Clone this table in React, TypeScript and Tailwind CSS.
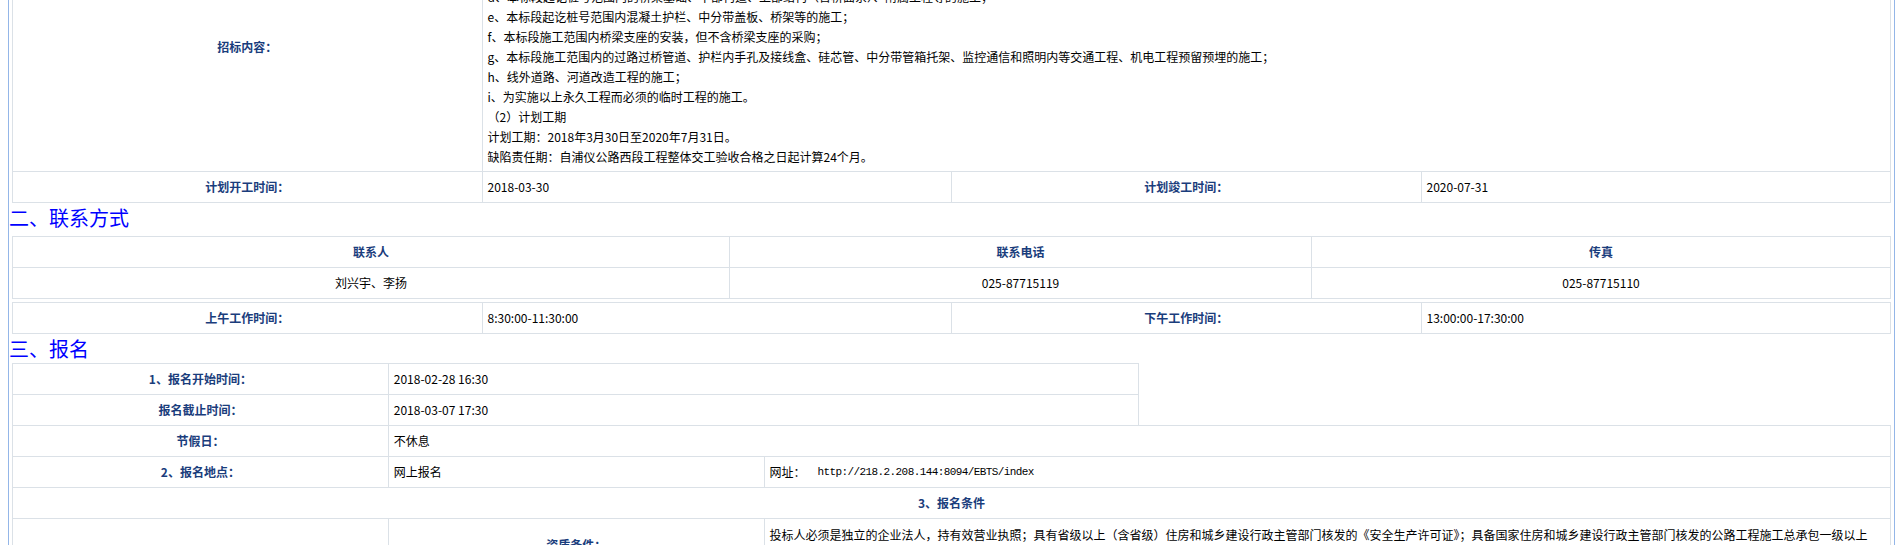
import React from "react";

const cell = "border-l border-t border-[#dbe1e7]";
const lab = "font-bold text-[#1a3d7c]";

const content = [
  "（1）招标范围：a、本标段起讫桩号范围内的路基、路面、涵洞通道工程的施工；",
  "b、本标段起讫桩号范围内的排水、防护工程及绿化工程的施工；",
  "c、本标段起讫桩号范围内的交通安全设施工程的施工；",
  "d、本标段起讫桩号范围内的桥梁基础、下部构造、上部结构（含桥面系）、附属工程等的施工；",
  "e、本标段起讫桩号范围内混凝土护栏、中分带盖板、桥架等的施工；",
  "f、本标段施工范围内桥梁支座的安装，但不含桥梁支座的采购；",
  "g、本标段施工范围内的过路过桥管道、护栏内手孔及接线盒、硅芯管、中分带管箱托架、监控通信和照明内等交通工程、机电工程预留预埋的施工；",
  "h、线外道路、河道改造工程的施工；",
  "i、为实施以上永久工程而必须的临时工程的施工。",
  "（2）计划工期",
  "计划工期：2018年3月30日至2020年7月31日。",
  "缺陷责任期：自浦仪公路西段工程整体交工验收合格之日起计算24个月。",
];

export default function App() {
  return (
    <div className="h-[545px] overflow-hidden bg-white text-[12px] text-black font-['Noto_Sans_CJK_SC',sans-serif]">
      <div className="mx-[8px] h-full flex flex-col border-x border-[#94b6e8]">
        <div className="px-[3px] -mt-[78px]">
          {/* Table 1 */}
          <div className="grid grid-cols-4 border-r border-b border-[#dbe1e7]">
            <div className={`${cell} ${lab} flex items-center justify-center`}>招标内容：</div>
            <div className={`${cell} col-span-3 py-[4px] px-[5px] leading-[20px]`}>
              {content.map((l, i) => (
                <div key={i} className="whitespace-nowrap">{l}</div>
              ))}
            </div>
            <div className={`${cell} ${lab} h-[31px] flex items-center justify-center`}>计划开工时间：</div>
            <div className={`${cell} h-[31px] flex items-center px-[5px]`}>2018-03-30</div>
            <div className={`${cell} ${lab} h-[31px] flex items-center justify-center`}>计划竣工时间：</div>
            <div className={`${cell} h-[31px] flex items-center px-[5px]`}>2020-07-31</div>
          </div>

          <div className="-mx-[3px] h-[33px] leading-[30px] text-[20px] text-[#0000ff]">二、联系方式</div>

          {/* Contact table */}
          <div className="grid grid-cols-[717px_582px_1fr] border-r border-b border-[#dbe1e7]">
            <div className={`${cell} ${lab} h-[31px] flex items-center justify-center`}>联系人</div>
            <div className={`${cell} ${lab} h-[31px] flex items-center justify-center`}>联系电话</div>
            <div className={`${cell} ${lab} h-[31px] flex items-center justify-center`}>传真</div>
            <div className={`${cell} h-[31px] flex items-center justify-center`}>刘兴宇、李扬</div>
            <div className={`${cell} h-[31px] flex items-center justify-center`}>025-87715119</div>
            <div className={`${cell} h-[31px] flex items-center justify-center`}>025-87715110</div>
          </div>

          <div className="mt-[3px] grid grid-cols-4 border-r border-b border-[#dbe1e7]">
            <div className={`${cell} ${lab} h-[31px] flex items-center justify-center`}>上午工作时间：</div>
            <div className={`${cell} h-[31px] flex items-center px-[5px]`}>8:30:00-11:30:00</div>
            <div className={`${cell} ${lab} h-[31px] flex items-center justify-center`}>下午工作时间：</div>
            <div className={`${cell} h-[31px] flex items-center px-[5px]`}>13:00:00-17:30:00</div>
          </div>

          <div className="-mx-[3px] h-[29px] leading-[29px] text-[20px] text-[#0000ff]">三、报名</div>

          {/* Registration table */}
          <div className="grid grid-cols-5">
            <div className={`${cell} ${lab} h-[31px] flex items-center justify-center`}>1、报名开始时间：</div>
            <div className={`${cell} col-span-2 border-r h-[31px] flex items-center px-[5px]`}>2018-02-28 16:30</div>
            <div className="col-span-2"></div>

            <div className={`${cell} ${lab} h-[31px] flex items-center justify-center`}>报名截止时间：</div>
            <div className={`${cell} col-span-2 border-r h-[31px] flex items-center px-[5px]`}>2018-03-07 17:30</div>
            <div className="col-span-2"></div>

            <div className={`${cell} ${lab} h-[31px] flex items-center justify-center`}>节假日：</div>
            <div className={`${cell} col-span-4 border-r h-[31px] flex items-center px-[5px]`}>不休息</div>

            <div className={`${cell} ${lab} h-[31px] flex items-center justify-center`}>2、报名地点：</div>
            <div className={`${cell} h-[31px] flex items-center px-[5px]`}>网上报名</div>
            <div className={`${cell} col-span-3 border-r h-[31px] flex items-center px-[5px]`}>
              <span>网址：</span>
              <span className="ml-[12px] font-['Liberation_Mono',monospace] text-[11px] tracking-[-0.6px]">http://218.2.208.144:8094/EBTS/index</span>
            </div>

            <div className={`${cell} ${lab} col-span-5 border-r h-[31px] flex items-center justify-center`}>3、报名条件</div>

            <div className={`${cell}`}></div>
            <div className={`${cell} ${lab} flex items-center justify-center`}>资质条件：</div>
            <div className={`${cell} col-span-3 border-r pt-[6px] pb-[6px] px-[5px] leading-[20px]`}>
              <div className="whitespace-nowrap">投标人必须是独立的企业法人，持有效营业执照；具有省级以上（含省级）住房和城乡建设行政主管部门核发的《安全生产许可证》；具备国家住房和城乡建设行政主管部门核发的公路工程施工总承包一级以上</div>
              <div className="whitespace-nowrap">资质，并在人员、设备、资金等方面具有相应的施工能力。</div>
            </div>
          </div>
        </div>
      </div>
    </div>
  );
}
